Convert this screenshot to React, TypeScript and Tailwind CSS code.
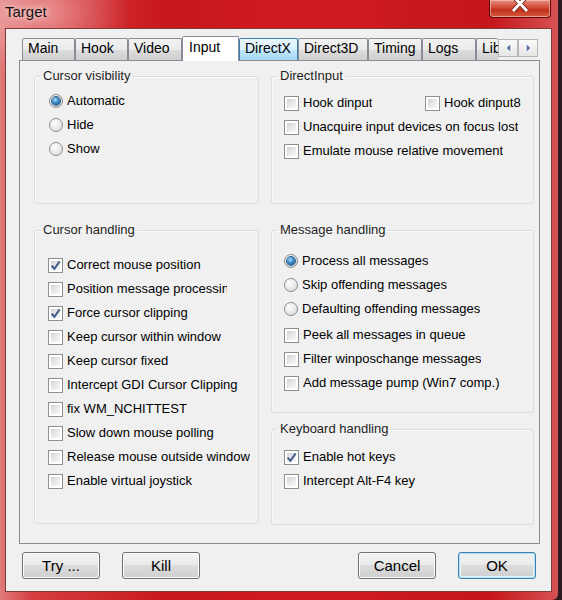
// Win7 style "Target" dialog, Input tab.

type ItemProps = { kind: 'check' | 'radio'; checked?: boolean; label: string; clip?: string };

function CheckBox({ checked }: { checked?: boolean }) {
  return (
    <span className="w-[15px] h-[15px] shrink-0 border border-[#8e8f8f] bg-white p-[2px] flex">
      <span className="flex-1 flex items-center justify-center bg-[linear-gradient(135deg,#cfd2d6_0%,#e9eaec_55%,#f8f8f8_100%)]">
        {checked && (
          <svg viewBox="0 0 9 9" className="w-[11px] h-[11px] -m-[1px]">
            <path d="M1.3 4.6 L3.6 7.2 L7.9 1.2" fill="none" stroke="#4a5e8e" strokeWidth="1.7" />
          </svg>
        )}
      </span>
    </span>
  );
}

function Radio({ checked }: { checked?: boolean }) {
  return (
    <span className="w-[14px] h-[14px] shrink-0 rounded-full border border-[#8a8d90] bg-[radial-gradient(circle_at_35%_30%,#ffffff_0%,#e9e9e9_55%,#cfd1d3_100%)] flex items-center justify-center">
      {checked && (
        <span className="w-[8px] h-[8px] rounded-full bg-[radial-gradient(circle_at_40%_35%,#a9e1fb_0%,#3a86c4_45%,#154978_100%)] shadow-[0_0_0_1px_#2b5d8a]" />
      )}
    </span>
  );
}

function Item({ kind, checked, label, clip }: ItemProps) {
  return (
    <div className="h-[24px] flex items-center gap-[4px]">
      {kind === 'check' ? <CheckBox checked={checked} /> : <Radio checked={checked} />}
      <span className={`whitespace-nowrap overflow-hidden leading-[16px] ${clip ?? ''}`}>{label}</span>
    </div>
  );
}

function Group({ title, h, pad, children }: { title: string; h: string; pad: string; children: React.ReactNode }) {
  return (
    <fieldset className={`${h} border border-[#d5dfe5] rounded-[3px] shadow-[inset_1px_1px_0_#fbfbfb]`}>
      <legend className="ml-[6px] px-[2px] leading-[16px] text-[#1e1e1e]">{title}</legend>
      <div className={pad}>{children}</div>
    </fieldset>
  );
}

function Tab({ label, w, kind }: { label: string; w: string; kind?: 'sel' | 'hot' | 'clip' }) {
  if (kind === 'sel') {
    return (
      <div className={`${w} h-[25px] -mb-px relative z-10 border-x border-t border-[#898c95] rounded-t-[2px] bg-white pl-[6px] pt-[2px] text-[14px] leading-[17px]`}>
        {label}
      </div>
    );
  }
  const bg =
    kind === 'hot'
      ? 'border-[#3c7fb1] bg-[linear-gradient(180deg,#eaf6fd_0%,#d9f0fc_50%,#bee6fd_51%,#a7d9f5_100%)]'
      : 'border-[#898c95] bg-[linear-gradient(180deg,#f2f2f2_0%,#ebebeb_50%,#dddddd_51%,#cfcfcf_100%)]';
  return (
    <div
      className={`${w} h-[22px] border-x border-t rounded-t-[2px] ${bg} pl-[5px] pt-[1px] text-[14px] leading-[17px] whitespace-nowrap overflow-hidden ${kind === 'clip' ? 'border-r-0' : ''}`}
    >
      {label}
    </div>
  );
}

function Button({ label, def }: { label: string; def?: boolean }) {
  return (
    <button
      className={`w-[78px] h-[27px] rounded-[3px] border text-[15px] leading-[17px] text-black bg-[linear-gradient(180deg,#f2f2f2_0%,#ebebeb_45%,#dddddd_50%,#cfcfcf_100%)] ${
        def
          ? 'border-[#3c7fb1] shadow-[inset_0_0_0_1px_#b6def6,inset_0_0_0_2px_#e3f2fb]'
          : 'border-[#707070] shadow-[inset_0_0_0_1px_#fbfbfb]'
      }`}
    >
      {label}
    </button>
  );
}

export default function App() {
  return (
    <div className="w-[562px] h-[600px] flex bg-[#2e1b22] font-['Liberation_Sans',Arial,sans-serif] text-[13px] text-black">
      {/* window frame */}
      <div className="w-[558px] h-full flex flex-col rounded-br-[6px] bg-[radial-gradient(ellipse_90px_60px_at_40px_12px,rgba(255,225,225,0.55),transparent),linear-gradient(90deg,#e07a7a_0%,#d43d3f_6%,#c9181d_30%,#cf1c20_60%,#c5161b_88%,#d65252_100%)]">
        {/* title bar */}
        <div className="h-[28px] relative shrink-0 pl-[5px] pt-[3px]">
          <span className="text-[15px] leading-[17px] text-[#141414] [text-shadow:0_0_6px_rgba(255,255,255,0.9)]">
            Target
          </span>
          <div className="absolute top-0 right-[7px] w-[62px] h-[18px] rounded-b-[4px] border border-t-0 border-[#5c0b0b] bg-[linear-gradient(180deg,#e98f82_0%,#d4503c_40%,#c1301d_60%,#d65a3f_100%)] shadow-[inset_0_0_0_1px_rgba(255,200,190,0.6)] flex justify-center">
            <svg viewBox="0 0 20 12" className="w-[20px] h-[12px]">
              <path d="M3 -4 L17 11 M17 -4 L3 11" stroke="#6a1a10" strokeWidth="4.6" />
              <path d="M3 -4 L17 11 M17 -4 L3 11" stroke="#ffffff" strokeWidth="3" />
            </svg>
          </div>
        </div>

        {/* client area */}
        <div className="flex-1 ml-[5px] mr-[6px] mb-[8px] border border-[#7e3b3b] bg-[#f0f0f0] flex flex-col">
          <div className="ml-[13px] mt-[7px] w-[521px]">
            {/* tab strip */}
            <div className="relative h-[24px] flex items-end pl-[3px]">
              <Tab label="Main" w="w-[53px]" />
              <Tab label="Hook" w="w-[53px]" />
              <Tab label="Video" w="w-[54px]" />
              <Tab label="Input" w="w-[57px]" kind="sel" />
              <Tab label="DirectX" w="w-[59px]" kind="hot" />
              <Tab label="Direct3D" w="w-[70px]" />
              <Tab label="Timing" w="w-[54px]" />
              <Tab label="Logs" w="w-[54px]" />
              <Tab label="Libs" w="w-[22px]" kind="clip" />
              <div className="absolute left-[479px] top-[3px] flex">
                {['M5 0 L1 4 L5 8 Z', 'M1 0 L5 4 L1 8 Z'].map((d) => (
                  <div
                    key={d}
                    className="w-[20px] h-[18px] border border-[#b5b5b5] bg-[linear-gradient(180deg,#fafafa,#e6e6e6)] flex items-center justify-center"
                  >
                    <svg viewBox="0 0 6 8" className="w-[5px] h-[8px]">
                      <path d={d} fill="#4f6f9f" />
                    </svg>
                  </div>
                ))}
              </div>
            </div>

            {/* tab page */}
            <div className="h-[484px] border border-[#898c95] bg-[#f0f0f0] flex gap-[12px] pl-[14px] pt-[7px]">
              <div className="w-[225px] flex flex-col gap-[18px]">
                <Group title="Cursor visibility" h="h-[136px]" pad="pl-[14px] pt-[5px]">
                  <Item kind="radio" checked label="Automatic" />
                  <Item kind="radio" label="Hide" />
                  <Item kind="radio" label="Show" />
                </Group>
                <Group title="Cursor handling" h="h-[302px]" pad="pl-[13px] pt-[15px]">
                  <Item kind="check" checked label="Correct mouse position" />
                  <Item kind="check" label="Position message processing" clip="w-[160px]" />
                  <Item kind="check" checked label="Force cursor clipping" />
                  <Item kind="check" label="Keep cursor within window" />
                  <Item kind="check" label="Keep cursor fixed" />
                  <Item kind="check" label="Intercept GDI Cursor Clipping" />
                  <Item kind="check" label="fix WM_NCHITTEST" />
                  <Item kind="check" label="Slow down mouse polling" />
                  <Item kind="check" label="Release mouse outside window" />
                  <Item kind="check" label="Enable virtual joystick" />
                </Group>
              </div>

              <div className="w-[263px] flex flex-col">
                <Group title="DirectInput" h="h-[136px]" pad="pl-[12px] pt-[7px]">
                  <div className="flex">
                    <div className="w-[141px]">
                      <Item kind="check" label="Hook dinput" />
                    </div>
                    <Item kind="check" label="Hook dinput8" />
                  </div>
                  <Item kind="check" label="Unacquire input devices on focus lost" />
                  <Item kind="check" label="Emulate mouse relative movement" />
                </Group>
                <div className="h-[18px]" />
                <Group title="Message handling" h="h-[191px]" pad="pl-[12px] pt-[11px]">
                  <Item kind="radio" checked label="Process all messages" />
                  <Item kind="radio" label="Skip offending messages" />
                  <Item kind="radio" label="Defaulting offending messages" />
                  <div className="h-[2px]" />
                  <Item kind="check" label="Peek all messages in queue" />
                  <Item kind="check" label="Filter winposchange messages" />
                  <Item kind="check" label="Add message pump (Win7 comp.)" />
                </Group>
                <div className="h-[8px]" />
                <Group title="Keyboard handling" h="h-[104px]" pad="pl-[12px] pt-[8px]">
                  <Item kind="check" checked label="Enable hot keys" />
                  <Item kind="check" label="Intercept Alt-F4 key" />
                </Group>
              </div>
            </div>
          </div>

          {/* bottom buttons */}
          <div className="mt-[8px] pl-[16px] pr-[15px] flex justify-between">
            <div className="flex gap-[22px]">
              <Button label="Try ..." />
              <Button label="Kill" />
            </div>
            <div className="flex gap-[22px]">
              <Button label="Cancel" />
              <Button label="OK" def />
            </div>
          </div>
        </div>
      </div>
    </div>
  );
}
